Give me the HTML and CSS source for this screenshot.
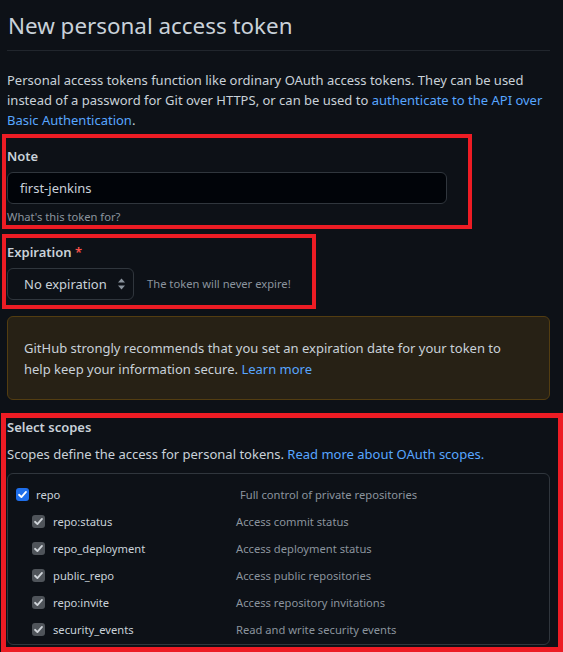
FILE: index.html
```html
<!DOCTYPE html>
<html lang="en">
<head>
<meta charset="utf-8">
<title>New personal access token</title>
<link rel="stylesheet" href="styles.css">
</head>
<body>
<div class="page">
  <h1 class="title">New personal access token</h1>
  <p class="intro">Personal access tokens function like ordinary OAuth access tokens. They can be used instead of a password for Git over HTTPS, or can be used to <a class="link" href="#">authenticate to the API over Basic Authentication</a>.</p>

  <div class="group note-group">
    <label class="label">Note</label>
    <div class="input">first-jenkins</div>
    <div class="hint">What's this token for?</div>
  </div>

  <div class="group exp-group">
    <label class="label">Expiration <span class="req">*</span></label>
    <div class="exp-row">
      <div class="select">No expiration
        <svg class="arrows" width="9" height="14" viewBox="0 0 9 14"><path d="M4.5 1.5 L8 5.5 H1 Z M4.5 12.5 L8 8.5 H1 Z" fill="#8b949e"/></svg>
      </div>
      <span class="exp-note">The token will never expire!</span>
    </div>
  </div>

  <div class="flash">GitHub strongly recommends that you set an expiration date for your token to help keep your information secure. <a class="link" href="#">Learn more</a></div>

  <div class="scopes">
    <div class="scopes-title">Select scopes</div>
    <div class="scopes-desc">Scopes define the access for personal tokens. <a class="link" href="#">Read more about OAuth scopes.</a></div>
    <div class="scope-box">
      <div class="row parent">
        <span class="cb cb-on"><svg width="11" height="11" viewBox="0 0 12 12"><path d="M2.2 6.3 L4.8 8.8 L9.8 3.2" fill="none" stroke="#fff" stroke-width="2" stroke-linecap="round" stroke-linejoin="round"/></svg></span>
        <span class="name name-parent">repo</span>
        <span class="desc">Full control of private repositories</span>
      </div>
      <div class="row child">
        <span class="cb cb-dis"><svg width="11" height="11" viewBox="0 0 12 12"><path d="M2.2 6.3 L4.8 8.8 L9.8 3.2" fill="none" stroke="#d0d5da" stroke-width="2" stroke-linecap="round" stroke-linejoin="round"/></svg></span>
        <span class="name name-child">repo:status</span>
        <span class="desc">Access commit status</span>
      </div>
      <div class="row child">
        <span class="cb cb-dis"><svg width="11" height="11" viewBox="0 0 12 12"><path d="M2.2 6.3 L4.8 8.8 L9.8 3.2" fill="none" stroke="#d0d5da" stroke-width="2" stroke-linecap="round" stroke-linejoin="round"/></svg></span>
        <span class="name name-child">repo_deployment</span>
        <span class="desc">Access deployment status</span>
      </div>
      <div class="row child">
        <span class="cb cb-dis"><svg width="11" height="11" viewBox="0 0 12 12"><path d="M2.2 6.3 L4.8 8.8 L9.8 3.2" fill="none" stroke="#d0d5da" stroke-width="2" stroke-linecap="round" stroke-linejoin="round"/></svg></span>
        <span class="name name-child">public_repo</span>
        <span class="desc">Access public repositories</span>
      </div>
      <div class="row child">
        <span class="cb cb-dis"><svg width="11" height="11" viewBox="0 0 12 12"><path d="M2.2 6.3 L4.8 8.8 L9.8 3.2" fill="none" stroke="#d0d5da" stroke-width="2" stroke-linecap="round" stroke-linejoin="round"/></svg></span>
        <span class="name name-child">repo:invite</span>
        <span class="desc">Access repository invitations</span>
      </div>
      <div class="row child">
        <span class="cb cb-dis"><svg width="11" height="11" viewBox="0 0 12 12"><path d="M2.2 6.3 L4.8 8.8 L9.8 3.2" fill="none" stroke="#d0d5da" stroke-width="2" stroke-linecap="round" stroke-linejoin="round"/></svg></span>
        <span class="name name-child">security_events</span>
        <span class="desc">Read and write security events</span>
      </div>
    </div>
  </div>

  <div class="mark mark-note"></div>
  <div class="mark mark-exp"></div>
  <div class="mark mark-scopes"></div>
</div>
</body>
</html>
```

FILE: styles.css
```css
* { box-sizing: border-box; }
html, body {
  margin: 0;
  background: #0d1117;
  height: 100%;
  overflow: hidden;
}
body {
  font-family: "Noto Sans", "Open Sans", sans-serif;
  font-size: 13px;
  line-height: 20px;
  color: #c9d1d9;
}
.page {
  position: relative;
  width: 550px;
  padding-left: 7px;
  height: 652px;
}
.link { color: #58a6ff; text-decoration: none; }

.title {
  margin: 0;
  padding: 8px 0 6px 1px;
  font-size: 22.4px;
  line-height: 36px;
  font-weight: 400;
  color: #c9d1d9;
  border-bottom: 1px solid #21262d;
}
.intro {
  margin: 19px 0 0;
}
.group { display: flex; flex-direction: column; }
.note-group { margin-top: 16px; }
.label {
  font-weight: 600;
  font-size: 13px;
  line-height: 20px;
}
.req { color: #f85149; }
.input {
  margin-top: 6px;
  width: 440px;
  height: 32px;
  background: #010409;
  border: 1px solid #30363d;
  border-radius: 6px;
  padding: 5px 12px;
  line-height: 20px;
}
.hint {
  margin-top: 4px;
  font-size: 11.2px;
  line-height: 18px;
  color: #8b949e;
}
.exp-group { margin-top: 16px; }
.exp-row {
  margin-top: 6px;
  display: flex;
  align-items: center;
  gap: 13px;
}
.select {
  width: 127px;
  height: 32px;
  border: 1px solid #30363d;
  border-radius: 6px;
  padding: 5px 0 5px 16px;
  display: flex;
  align-items: center;
  position: relative;
}
.arrows { position: absolute; right: 7px; top: 8px; }
.exp-note { font-size: 11.2px; color: #8b949e; }

.flash {
  margin-top: 16px;
  background: #272115;
  border: 1px solid #533d11;
  border-radius: 6px;
  padding: 21px 26px 19px 16px;
  line-height: 21px;
}

.scopes { margin-top: 17px; }
.scopes-title { font-weight: 600; }
.scopes-desc { margin-top: 7px; }
.scope-box {
  margin-top: 9px;
  border: 1px solid #30363d;
  border-radius: 6px;
  padding: 7px 0 1px 8px;
}
.row {
  display: flex;
  align-items: center;
  height: 27px;
}
.child { padding-left: 16px; }
.cb {
  width: 13px;
  height: 13px;
  border-radius: 3px;
  display: flex;
  align-items: center;
  justify-content: center;
  flex: none;
}
.cb-on { background: #1f6feb; }
.cb-dis { background: #4f545a; }
.name { margin-left: 7px; flex: none; font-size: 11.2px; }
.name-parent { width: 204px; }
.name-child { margin-left: 8px; width: 183px; }
.desc { color: #8b949e; font-size: 11.2px; }

.mark {
  position: absolute;
  border: 4px solid #ed1c24;
}
.mark-note { left: 2px; top: 134px; width: 470px; height: 95px; }
.mark-exp { left: 2px; top: 234px; width: 314px; height: 75px; }
.mark-scopes { left: 1px; top: 413px; width: 562px; height: 239px; border-width: 5px; }
```
